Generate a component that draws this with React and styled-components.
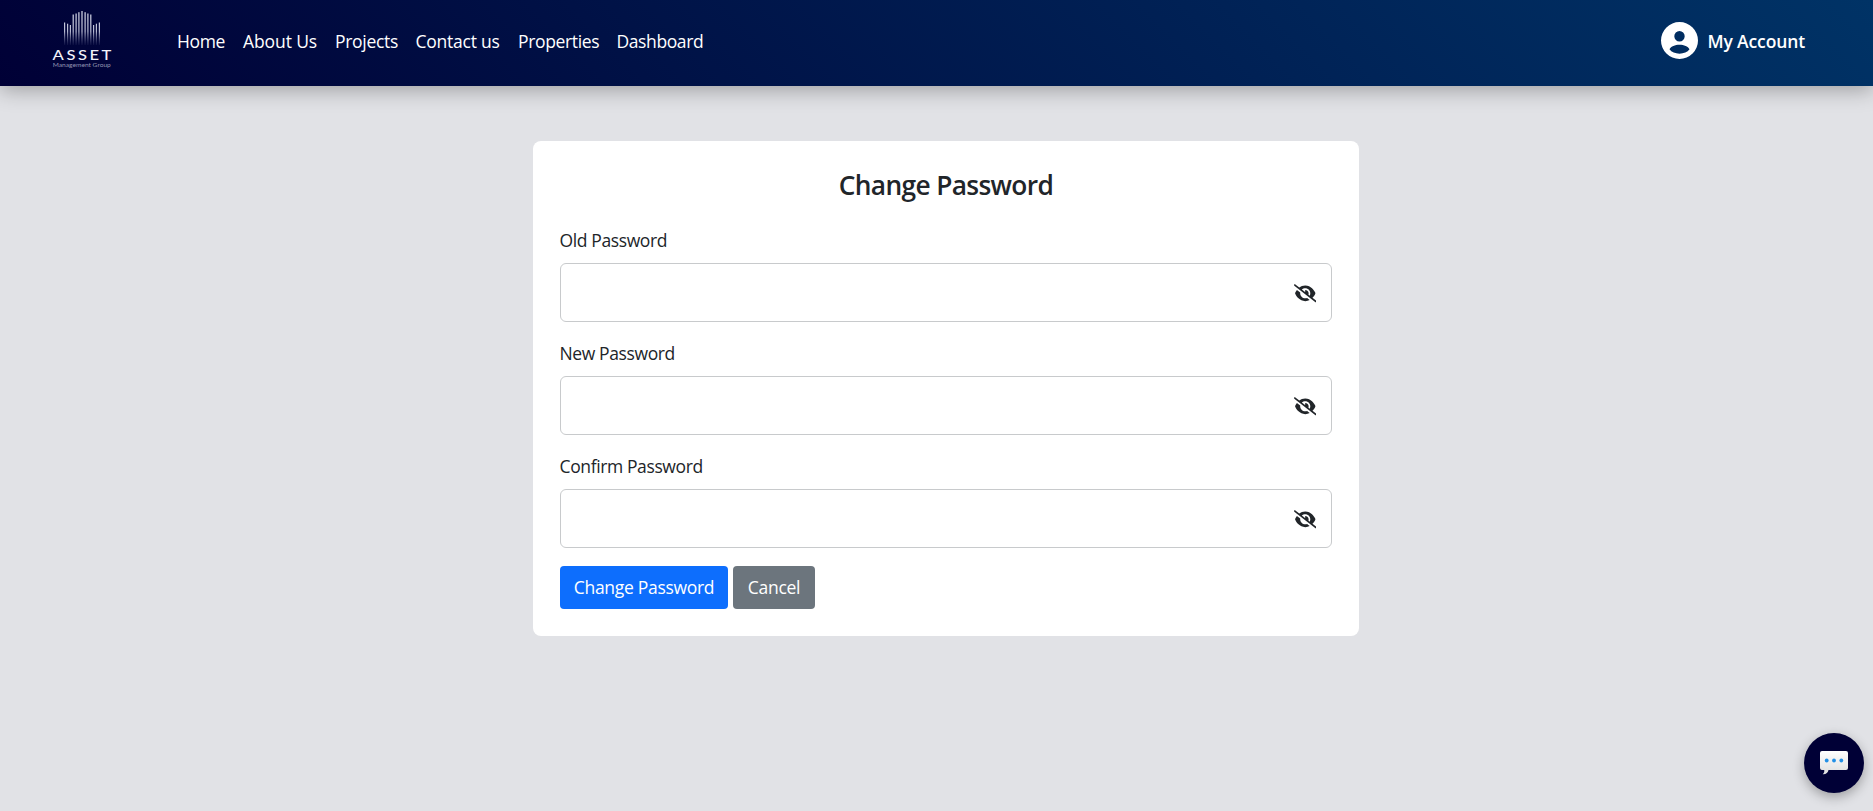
import React from "react";
import styled, { createGlobalStyle } from "styled-components";
import { FaEyeSlash } from "react-icons/fa6";

const GlobalStyle = createGlobalStyle`
  *, *::before, *::after { box-sizing: border-box; }
  html { font-size: 18px; }
  body {
    margin: 0;
    min-height: 100vh;
    background: #e1e2e6;
    color: #212529;
    font-family: "Segoe UI", "Open Sans", "Noto Sans", sans-serif;
    font-size: 17.5px;
    line-height: 27px;
    overflow: hidden;
  }
`;

const Header = styled.header`
  display: flex;
  align-items: center;
  height: 86px;
  padding: 0 68px 0 50px;
  background: linear-gradient(45deg, #000036, #003366);
  box-shadow: 0 4px 20px rgba(0, 0, 0, 0.3);
  color: #fff;
`;

const Logo = styled.a`
  display: block;
  width: 64px;
  height: 64px;
  margin: -6px 63px 0 0;
`;

const Nav = styled.nav`
  display: flex;
  flex: 1;
  gap: 18px;
  margin-top: -4px;
`;

const NavLink = styled.a`
  width: ${(p) => p.$width}px;
  letter-spacing: ${(p) => p.$track}px;
  white-space: nowrap;
`;

const Account = styled.a`
  display: flex;
  align-items: center;
  gap: 9px;
  margin-top: -5px;
`;

const AccountName = styled.span`
  margin-top: 1px;
  font-weight: 600;
  letter-spacing: -0.12px;
`;

const Card = styled.form`
  width: 826px;
  height: 495px;
  margin: 55px auto 0 533px;
  padding: 27px;
  border-radius: 8px;
  background: #fff;
`;

const Title = styled.h2`
  margin: 1px 0 26px;
  font-size: 26.3px;
  font-weight: 600;
  line-height: 32px;
  letter-spacing: -0.65px;
  text-align: center;
`;

const Field = styled.div`
  margin-bottom: 18px;
`;

const Label = styled.label`
  display: block;
  margin: 0 0 9px -0.5px;
  letter-spacing: -0.38px;
`;

const InputBox = styled.div`
  display: flex;
  align-items: center;
  height: 59px;
  padding: 1px 15px 0 0;
  border: 1px solid #c8cacc;
  border-radius: 6px;
`;

const Input = styled.input`
  flex: 1;
  height: 100%;
  padding: 0 14px;
  border: 0;
  outline: 0;
  background: transparent;
  font: inherit;
`;

const Actions = styled.div`
  display: flex;
  gap: 5px;
`;

const Button = styled.button`
  width: ${(p) => p.$width}px;
  height: 43px;
  padding: 0 0 1px;
  border: 0;
  border-radius: 4px;
  background: ${(p) => p.$color};
  color: #fff;
  font: inherit;
  letter-spacing: -0.3px;
  white-space: nowrap;
`;

const ChatButton = styled.button`
  position: fixed;
  right: 9px;
  bottom: 18px;
  display: flex;
  align-items: center;
  justify-content: center;
  width: 60px;
  height: 60px;
  padding: 0;
  border: 0;
  border-radius: 50%;
  background: #000036;
  box-shadow: 0 4px 12px rgba(0, 0, 0, 0.3);
`;

const links = [
  ["Home", 48, -0.4],
  ["About Us", 74, -0.1],
  ["Projects", 62.5, -0.3],
  ["Contact us", 84.5, -0.25],
  ["Properties", 80.5, -0.35],
  ["Dashboard", 87, -0.4],
];

const fields = ["Old Password", "New Password", "Confirm Password"];

const bars = [
  [14, 14.5], [17, 15.7], [19.8, 17], [22.6, 6.5], [25.5, 5.5], [28.3, 4.2],
  [31.4, 3], [34.5, 4.2], [37.3, 5.5], [40.2, 6.5], [43, 17], [45.8, 15.7], [48.8, 14.5],
];

function AssetLogo() {
  return (
    <svg width="64" height="64" viewBox="0 0 64 64">
      <defs>
        <linearGradient id="bar" x1="0" y1="3" x2="0" y2="37" gradientUnits="userSpaceOnUse">
          <stop offset="0" stopColor="#dcdfee" />
          <stop offset="0.6" stopColor="#b4b7cf" />
          <stop offset="1" stopColor="#777aa0" stopOpacity="0.1" />
        </linearGradient>
      </defs>
      {bars.map(([x, top]) => (
        <rect key={x} x={x} y={top} width="1.2" height={37 - top} fill="url(#bar)" />
      ))}
      <text transform="translate(2.6 52.3) scale(1.22 1)" fill="#f3f3fa" fontFamily="Lato, sans-serif" fontSize="13.6" fontWeight="500" textLength="48.2" lengthAdjust="spacing">ASSET</text>
      <text x="2.8" y="59" fill="#9496b3" fontFamily="Lato, sans-serif" fontSize="6" textLength="58" lengthAdjust="spacingAndGlyphs">Management Group</text>
    </svg>
  );
}

function Avatar() {
  return (
    <svg width="37" height="37" viewBox="0 0 37 37">
      <path
        fill="#fff"
        fillRule="evenodd"
        d="M18.5 0a18.5 18.5 0 1 1 0 37a18.5 18.5 0 0 1 0-37ZM18.5 9a5.2 5.2 0 1 0 0 10.4a5.2 5.2 0 0 0 0-10.4ZM8.5 27.3C10 24.2 14 22.7 18.5 22.7S27 24.2 28.5 27.3C26.5 30.2 22.7 31.7 18.5 31.7S10.5 30.2 8.5 27.3Z"
      />
    </svg>
  );
}

function ChatBubble() {
  return (
    <svg width="28" height="24" viewBox="0 0 28 24">
      <defs>
        <linearGradient id="bubble" x1="0" y1="0" x2="0" y2="1">
          <stop offset="0" stopColor="#ffffff" />
          <stop offset="1" stopColor="#dedede" />
        </linearGradient>
      </defs>
      <path fill="url(#bubble)" d="M2 0H26Q28 0 28 2V17Q28 19 26 19H8.5C8 21.5 6 23.5 2.7 23.2C4.2 22 4.5 20.5 4.2 19H2Q0 19 0 17V2Q0 0 2 0Z" />
      {[6.7, 14, 21.3].map((x) => <circle key={x} cx={x} cy="9.5" r="1.9" fill="#2390e6" />)}
    </svg>
  );
}

export default function App() {
  return (
    <>
      <GlobalStyle />
      <Header>
        <Logo><AssetLogo /></Logo>
        <Nav>
          {links.map(([text, width, track]) => (
            <NavLink key={text} $width={width} $track={track}>{text}</NavLink>
          ))}
        </Nav>
        <Account>
          <Avatar />
          <AccountName>My Account</AccountName>
        </Account>
      </Header>
      <Card>
        <Title>Change Password</Title>
        {fields.map((text) => (
          <Field key={text}>
            <Label>{text}</Label>
            <InputBox>
              <Input type="password" aria-label={text} />
              <FaEyeSlash size={22.5} />
            </InputBox>
          </Field>
        ))}
        <Actions>
          <Button type="button" $color="#0d6efd" $width={168}>Change Password</Button>
          <Button type="button" $color="#6c757d" $width={82}>Cancel</Button>
        </Actions>
      </Card>
      <ChatButton aria-label="Open chat"><ChatBubble /></ChatButton>
    </>
  );
}
